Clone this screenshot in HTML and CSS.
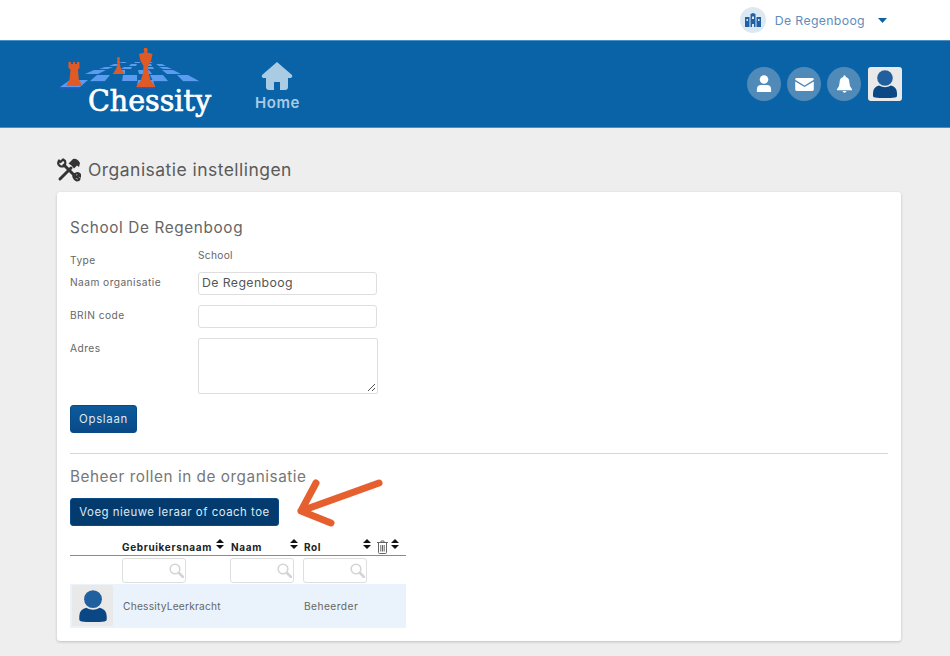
FILE: index.html
```html
<!DOCTYPE html>
<html lang="nl">
<head>
<meta charset="utf-8">
<title>Organisatie instellingen</title>
<link rel="stylesheet" href="styles.css">
</head>
<body>
<div class="topbar">
  <div class="org-icon">
    <svg width="16" height="14" viewBox="0 0 16 14"><path fill="#1f62a3" d="M0 4h4.500v10H0zM11.500 4H16v10h-4.500zM5.500 1L8 0l2.500 1v13H9v-3H7v3H5.500z"/><path fill="#dde9f2" d="M1.500 6h1.500v2H1.500zM13 6h1.500v2H13zM7 3.500h2V6H7z"/></svg>
  </div>
  <span class="org-name">De Regenboog</span>
  <svg class="caret" width="9" height="5" viewBox="0 0 9 5"><path fill="#10629f" d="M0 0h9L4.500 5z"/></svg>
</div>
<header class="nav">
  <svg class="logo" width="170" height="78" viewBox="0 0 170 78">
    <path fill="#3456c8" d="M1 40h20l-1 1.500H0zM78 40h18v1.500H78zM31 34h15l-1 1H30zM124 34h16l1 1h-17zM94 34h15v1H94z"/>
    <g fill="#5b9bf0">
      <path d="M1 40h20l8-7H11zM78 40h18l-2-7H79z"/>
      <path d="M31 34h15l5-6H38zM63 34h15v-6H64zM94 34h15l-5-6H91zM124 34h16l-11-6h-11z"/>
      <path d="M26 27h13l8-4H35zM54 27h12v-4h-9zM80 27h13l-3-4H79zM108 27h14l-8-4h-11z"/>
      <path d="M40 22h9l5-2h-8zM62 22h10l1-2h-8zM85 22h10l-1-2h-9zM104 22h9l-5-2h-8z"/>
      <path d="M50 19h7l4-2h-6zM70 19h7l1-2h-6zM86 19h7l-1-2h-6zM100 19h7l-4-2h-6z"/>
      <path d="M60 16h6l2-1h-5zM75 16h6v-1h-5zM88 16h6l-2-1h-5z"/>
    </g>
    <g fill="#e05a26">
      <path d="M9.500 15h2.500v2h2v-2h2v2h2v-2h2.500v6l-1.500 1.500.8 10 3.700 6.500H7l3.500-6.500 1-10L9.500 21z"/>
      <path d="M59 10q2 0 2 2l-.7 1.500 1 1-.6 1.500 1 5 3.800 6H54l3.500-6 1-5-.8-1.500 1-1-.7-1.500q0-2 1-2z"/>
      <path d="M85 1h3l.7 2.500-.7 2 5.500 1.500-1.500 7-3 5 .5 7 2 7 5 7H77l5-7 2-7 .5-7-3-5-1.500-7 5.500-1.500-.7-2z"/>
    </g>
    <text class="logo-text" x="29" y="64" textLength="123" lengthAdjust="spacingAndGlyphs">Chessity</text>
  </svg>
  <a class="home" href="#">
    <svg width="32" height="28" viewBox="0 0 32 28"><path fill="#a9cbe4" d="M16 0L1 13q-1 2 1 3h3v9q0 3 3 3h5v-8h6v8h5q3 0 3-3v-9h3q2-1 1-3z"/></svg>
    <span>Home</span>
  </a>
  <div class="actions">
    <div class="circle">
      <svg width="16" height="18" viewBox="0 0 18 20"><circle cx="9" cy="5" r="4.800" fill="#fff"/><path fill="#fff" d="M1 19v-3q0-5 5-5h6q5 0 5 5v3z"/></svg>
    </div>
    <div class="circle">
      <svg width="19" height="13" viewBox="0 0 20 14"><path fill="#fff" d="M1.500 0h17q1.500 0 1.500 1.500v.5L10 8 0 2v-.5Q0 0 1.500 0zM0 3.800l10 6 10-6v8.700q0 1.500-1.500 1.500h-17Q0 14 0 12.500z"/></svg>
    </div>
    <div class="circle">
      <svg width="15" height="18" viewBox="0 0 17 20"><path fill="#fff" d="M8.500 0q1.500 0 1.500 2 4 1 4 6 0 5 3 8v1H0v-1q3-3 3-8 0-5 4-6 0-2 1.500-2zM6 18h5q-1 2-2.500 2T6 18z"/></svg>
    </div>
    <div class="avatar avatar-top">
      <svg width="26" height="28" viewBox="0 0 26 28"><use href="#person"/></svg>
    </div>
  </div>
</header>
<main class="page">
  <h1 class="title">
    <svg width="24" height="24" viewBox="0 0 24 24" fill="none" stroke="#333" stroke-linecap="round">
      <path stroke-width="3" d="M7 7l12 12"/>
      <path stroke-width="2.200" stroke-linejoin="round" d="M6 1.500L3.500 4 2 2.500Q0 6 3 8q2 1 4 0 2-2 1-5zM18 16q-2 1-1.500 3t3.500 3.500q2 0 2.500-1.500l-2.500-2 1.500-2 2 1.500q0-3-3-3.500z"/>
      <path stroke-width="3" d="M3 21L14 10"/>
      <path fill="#333" stroke="none" d="M11.500 5.500L16 1q4-1 7 4l-1 4-2-1.500-3 3-2.500-3z"/>
    </svg>
    <span>Organisatie instellingen</span>
  </h1>
  <section class="card">
    <h2 class="card-title">School De Regenboog</h2>
    <div class="row row-type"><span class="lbl lbl-type">Type</span><span class="val">School</span></div>
    <div class="row"><span class="lbl">Naam organisatie</span><div class="input">De Regenboog</div></div>
    <div class="row"><span class="lbl">BRIN code</span><div class="input"></div></div>
    <div class="row"><span class="lbl">Adres</span>
      <div class="textarea">
        <svg class="grip" width="9" height="9" viewBox="0 0 9 9"><path stroke="#555" fill="none" d="M1 8l7-7M5 8l3-3"/></svg>
      </div>
    </div>
    <button class="btn btn-save">Opslaan</button>
    <hr class="sep">
    <h2 class="card-title sub">Beheer rollen in de organisatie</h2>
    <div class="add-wrap">
      <button class="btn btn-add">Voeg nieuwe leraar of coach toe</button>
      <svg class="arrow" width="90" height="56" viewBox="0 0 90 56"><path fill="none" stroke="#e5602e" stroke-width="7" stroke-linecap="round" stroke-linejoin="round" d="M84 9L6 37M21 9L6 37l30 12"/></svg>
    </div>
    <div class="table">
      <div class="thead">
        <div class="th th-av"></div>
        <div class="th th-user">Gebruikersnaam<svg class="sort" width="8" height="10" viewBox="0 0 8 10"><use href="#sort"/></svg></div>
        <div class="th th-name">Naam<svg class="sort" width="8" height="10" viewBox="0 0 8 10"><use href="#sort"/></svg></div>
        <div class="th th-role">Rol<svg class="sort" width="8" height="10" viewBox="0 0 8 10"><use href="#sort"/></svg></div>
        <div class="th th-del">
          <svg width="11" height="14" viewBox="0 0 11 14" fill="none" stroke="#666"><path d="M0 2.500h11M4 2.500V1h3v1.500M1.500 3v9.500q0 1 1 1h6q1 0 1-1V3M3.800 5v6.500M5.500 5v6.500M7.200 5v6.500"/></svg>
          <svg class="sort" width="8" height="10" viewBox="0 0 8 10"><use href="#sort"/></svg>
        </div>
      </div>
      <div class="filters">
        <div class="f f-user"><svg width="15" height="15" viewBox="0 0 15 15"><use href="#search"/></svg></div>
        <div class="f f-name"><svg width="15" height="15" viewBox="0 0 15 15"><use href="#search"/></svg></div>
        <div class="f f-role"><svg width="15" height="15" viewBox="0 0 15 15"><use href="#search"/></svg></div>
      </div>
      <div class="tr">
        <div class="td-av"><div class="avatar avatar-row"><svg width="30" height="32" viewBox="0 0 26 28"><use href="#person"/></svg></div></div>
        <div class="td td-user">ChessityLeerkracht</div>
        <div class="td td-name"></div>
        <div class="td td-role">Beheerder</div>
      </div>
    </div>
  </section>
</main>
<svg class="defs" width="0" height="0">
  <defs>
    <symbol id="person" viewBox="0 0 26 28"><circle cx="13" cy="8" r="7.800" fill="#20609e"/><path fill="#0a4784" d="M1 26v-3q0-6 6-7.500 6 3.500 12 0 6 1.500 6 7.500v3q0 1-2 1.500-10 1.500-20 0-2-.5-2-1.500z"/></symbol>
    <symbol id="sort" viewBox="0 0 8 10"><path fill="#111" d="M4 0l4 4H0zM0 6h8l-4 4z"/></symbol>
    <symbol id="search" viewBox="0 0 15 15"><circle cx="6" cy="6" r="4.800" fill="none" stroke="#d4d4d4" stroke-width="1.600"/><path stroke="#d4d4d4" stroke-width="2.500" stroke-linecap="round" d="M10 10l4 4"/></symbol>
  </defs>
</svg>
</body>
</html>
```
FILE: styles.css
```css
* { box-sizing: border-box; }
html, body { margin: 0; padding: 0; }
body {
  width: 950px; height: 656px; overflow: hidden;
  background: #eeeeee;
  font-family: "Inter", "Open Sans", sans-serif;
  color: #555;
}
.topbar {
  height: 40px; background: #fff;
  display: flex; align-items: center; justify-content: flex-end;
  padding-right: 63px;
}
.org-icon {
  width: 26px; height: 26px; border-radius: 50%; background: #dde9f2;
  display: flex; align-items: center; justify-content: center;
  margin-right: 9px;
}
.org-name { font-size: 12.300px; color: #5f8db8; margin-right: 13px; letter-spacing: .33px; }
.caret { display: block; }
.nav {
  height: 88px; background: #0b63a7;
  border-top: 1px solid #4b8fc4; border-bottom: 1px solid #4b8fc4;
  display: flex; align-items: flex-start;
  padding-right: 48px;
}
.logo { margin: 6px 0 0 59px; display: block; flex: none; overflow: visible; }
.logo-text { font-family: "DejaVu Serif", serif; font-weight: 400; font-size: 30px; fill: #fff; stroke: #fff; stroke-width: .7px; }
.home {
  display: flex; flex-direction: column; align-items: center;
  margin: 21px 0 0 26px; color: #a9cbe4; text-decoration: none;
  font-size: 15px; font-weight: 600; gap: 3px;
  letter-spacing: .55px;
}
.home svg { display: block; }
.actions { margin-left: auto; margin-top: 26px; display: flex; align-items: center; gap: 6px; }
.circle {
  width: 34px; height: 34px; border-radius: 50%; background: #4f8ab9;
  display: flex; align-items: center; justify-content: center;
}
.avatar { background: #e9e9e9; display: flex; align-items: center; justify-content: center; }
.avatar-top { width: 34px; height: 34px; border-radius: 3px; margin-left: 1px; }
.page { padding: 0 49px 0 57px; }
.title {
  margin: 28px 0 9px; height: 27px;
  display: flex; align-items: center; gap: 7px;
  font-weight: 400; font-size: 17.500px; color: #5a5a5a; letter-spacing: .46px;
}
.card {
  background: #fff; border-radius: 3px; height: 449px;
  box-shadow: 0 1px 3px rgba(0,0,0,.2);
  padding: 27px 13px 0 13px;
}
.card-title { margin: 0; font-weight: 400; font-size: 15.300px; color: #666; line-height: 18px; letter-spacing: .63px; }
.row { display: flex; align-items: flex-start; width: 308px; margin-bottom: 10px; }
.row-type { margin: 11px 0 0; height: 24px; }
.lbl { width: 128px; flex: none; font-size: 10.200px; color: #666; line-height: 14px; padding-top: 3px; letter-spacing: .44px; }
.lbl-type { padding-top: 5px; }
.val { font-size: 10.200px; color: #666; line-height: 14px; letter-spacing: .3px; }
.input {
  width: 179px; height: 23px; border: 1px solid #dedede; border-radius: 3px;
  font-size: 12.300px; color: #555; padding: 0 3px; line-height: 20px; background: #fff; letter-spacing: .4px;
}
.textarea {
  width: 181px; height: 56px; border: 1px solid #dedede; border-radius: 2px;
  position: relative; background: #fff;
}
.grip { position: absolute; right: 1px; bottom: 1px; }
.btn {
  display: block; border: 1px solid #0a4a86; border-radius: 3px; color: #dfe9f2;
  font-family: inherit; font-size: 11.400px; padding: 0; height: 28px;
}
.btn-save {
  width: 67px; margin-top: 11px; letter-spacing: .7px;
  background: linear-gradient(#0d5a9c, #084a88);
}
.sep { border: 0; border-top: 1px solid #d8d8d8; margin: 20px 0 0; }
.sub { margin-top: 14px; font-size: 15.300px; color: #777; letter-spacing: .55px; }
.add-wrap { position: relative; margin-top: 12px; height: 28px; }
.btn-add { width: 209px; background: #033b6e; border-color: #0a4a86; letter-spacing: .52px; }
.arrow { position: absolute; left: 225px; top: -24px; }
.table { width: 336px; margin-top: 14px; }
.thead {
  display: flex; height: 16px; border-bottom: 1px solid #5b97c4;
  font-size: 10px; font-weight: 700; color: #222; line-height: 14px;
}
.th { position: relative; letter-spacing: .64px; }
.th .sort { position: absolute; top: -1px; }
.th-av { width: 52px; }
.th-user { width: 109px; }
.th-user .sort { left: 94px; }
.th-name { width: 73px; }
.th-name .sort { left: 59px; }
.th-role { width: 73px; }
.th-role .sort { left: 59px; }
.th-del { flex: 1; display: flex; gap: 3px; }
.th-del svg { display: block; }
.th-del .sort { position: static; margin-top: -1px; }
.filters { display: flex; height: 28px; padding: 2px 0 0 52px; }
.f {
  width: 64px; height: 25px; border: 1px solid #dedede; border-radius: 3px;
  display: flex; align-items: center; justify-content: flex-end; padding-right: 1px;
}
.f-user { margin-right: 44px; }
.f-name { margin-right: 9px; }
.tr { display: flex; height: 44px; background: #eaf3fb; font-size: 10.200px; color: #666; align-items: center; }
.td-av { width: 52px; height: 44px; padding: 1px 0 0 2px; }
.avatar-row { width: 41px; height: 41px; border-radius: 2px; }
.td-user { width: 181px; padding-left: 1px; letter-spacing: .22px; }
.td-name { width: 0; }
.td-role { padding-left: 1px; letter-spacing: .45px; }
.defs { position: absolute; }
```
